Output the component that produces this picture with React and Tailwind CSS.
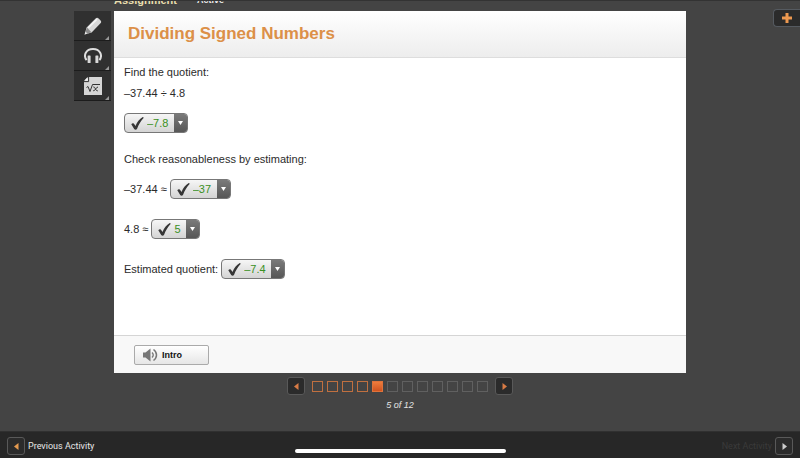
import React, { useState } from 'react';

const TOTAL_STEPS = 12;

const Check = () => (
  <svg viewBox="0 0 13 13" className="pointer-events-none absolute left-1.5 top-[3px] h-[13px] w-[13px]">
    <path d="M0.3 7.2 C1.4 6 2.8 6.1 3.5 7.4 L4.5 9 C6 5 8.4 2 11.8 0 L12.8 0.7 C9.8 4 7.6 7.4 6 11.9 C5.2 12.9 3.8 12.9 3.2 11.9 Z" fill="#363636" />
  </svg>
);

const AnswerSelect = ({ id, label, value }) => (
  <span className="relative inline-flex h-5 overflow-hidden rounded border border-[#777] bg-linear-to-b from-[#f6f6f6] to-[#d4d4d4]">
    <Check />
    <select id={id} aria-label={label} defaultValue={value}
      className="h-full appearance-none bg-transparent pl-[22px] pr-[18px] text-[11px] leading-[18px] text-[#3a9023] outline-none">
      <option value={value}>{value}</option>
    </select>
    <span className="pointer-events-none absolute inset-y-0 right-0 flex w-[13px] items-center justify-center bg-linear-to-b from-[#7a7a7a] to-[#575757]">
      <svg viewBox="0 0 5 4" className="h-1 w-[5px]"><path d="M0 0h5L2.5 4z" fill="#fff" /></svg>
    </span>
  </span>
);

const ArrowButton = ({ label, direction, color, onClick }) => (
  <button aria-label={label} onClick={onClick}
    className="flex h-[18px] w-[18px] shrink-0 items-center justify-center rounded-[3px] border border-[#595959] bg-[#2b2b2b]">
    <svg viewBox="0 0 5 7" className="h-[7px] w-[5px]">
      <path d={direction === 'left' ? 'M4.5 0v7L0 3.5z' : 'M0.5 0v7L5 3.5z'} fill={color} />
    </svg>
  </button>
);

const PencilIcon = () => (
  <svg viewBox="0 0 18 18" className="h-[18px] w-[18px]">
    <path d="M.6 17.4l2-7L11.6 1.5c.9-.9 2.1-.9 3-.1l2 2c.8.9.8 2-.1 2.9L7.6 15.4z" fill="#d8d8d8" />
    <path d="M3 10.6l4.4 4.6-5 1.7-1.2-1.2z" fill="#8b8b8b" />
    <path d="M4.3 10.8l8.7-8.7" stroke="#f5f5f5" strokeWidth="1.5" />
    <path d="M.6 17.4l.9-2.7 1.8 1.8z" fill="#eee" />
  </svg>
);

const HeadphonesIcon = () => (
  <svg viewBox="0 0 18 18" className="h-[18px] w-[18px]" fill="none">
    <path d="M2.6 13.2C-1 8.5 2 2 9 2s10 6.5 6.4 11.2" stroke="#dedede" strokeWidth="2" />
    <rect x="3.6" y="8.5" width="3" height="7.5" rx=".6" fill="#d8d8d8" />
    <rect x="11.4" y="8.5" width="3" height="7.5" rx=".6" fill="#d8d8d8" />
  </svg>
);

const FormulaIcon = () => (
  <svg viewBox="0 0 18 18" className="h-[18px] w-[18px]">
    <path d="M4.6 0H18v18H0V4.6z" fill="#d6d6d6" />
    <path d="M0 3.7L3.7 0v3.7z" fill="#f1f1f1" />
    <path d="M0 4.6h4.6V0" fill="none" stroke="#333" />
    <path d="M2.5 10.5l1.5-1 2 5 2.5-7H16" fill="none" stroke="#333" />
    <path d="M9.3 10c2-.8 2.2 4.5 4.5 3.8M14 10c-2 0-2.5 4-4.8 3.8" fill="none" stroke="#333" />
  </svg>
);

const tools = [
  { name: 'Highlighter', Icon: PencilIcon },
  { name: 'Audio', Icon: HeadphonesIcon },
  { name: 'Formulas', Icon: FormulaIcon },
];

const App = () => {
  const [step, setStep] = useState(5);

  return (
    <div className="flex min-h-screen flex-col bg-[#444] font-['Liberation_Sans',Arial,sans-serif] text-[11px] leading-4 text-[#2b2b2b]">
      <header className="flex h-[11px] items-end gap-5 overflow-hidden border-t border-[#333] pb-[5px] pl-[114px] font-bold">
        <span className="leading-3 text-[#eadfae]">Assignment</span>
        <span className="text-[9px] leading-3 text-[#eee]">Active</span>
      </header>

      <div className="flex flex-1">
        {/* Tools */}
        <aside className="flex w-[114px] shrink-0 flex-col items-end pr-[3px]">
          {tools.map(({ name, Icon }) => (
            <button key={name} aria-label={name}
              className="relative flex h-[30px] w-[37px] items-center justify-center border-b border-[#1c1c1c] bg-[#303030]">
              <Icon />
              <svg viewBox="0 0 4 4" className="absolute bottom-0 right-0.5 h-1 w-1"><path d="M4 0v4H0z" fill="#999" /></svg>
            </button>
          ))}
        </aside>

        {/* Lesson */}
        <main className="flex min-w-0 flex-1 flex-col bg-white">
          <div className="flex h-[47px] items-center border-b border-[#ddd] bg-linear-to-b from-white to-[#ededed] px-3.5">
            <h1 className="text-[17px] font-bold leading-6 text-[#dc9048]">Dividing Signed Numbers</h1>
          </div>
          <div className="flex flex-1 flex-col items-start px-2.5 pt-1.5">
            <p>Find the quotient:</p>
            <p className="mt-[5px]">–37.44 ÷ 4.8</p>
            <div className="mt-3 flex">
              <AnswerSelect id="quotient" label="Quotient" value="–7.8" />
            </div>
            <p className="mt-[18px]">Check reasonableness by estimating:</p>
            <div className="mt-3 flex items-center gap-[3px]">
              <label htmlFor="dividend">–37.44 ≈</label>
              <AnswerSelect id="dividend" label="–37.44 ≈" value="–37" />
            </div>
            <div className="mt-5 flex items-center gap-[3px]">
              <label htmlFor="divisor">4.8 ≈</label>
              <AnswerSelect id="divisor" label="4.8 ≈" value="5" />
            </div>
            <div className="mt-5 flex items-center gap-[3px]">
              <label htmlFor="estimate">Estimated quotient:</label>
              <AnswerSelect id="estimate" label="Estimated quotient:" value="–7.4" />
            </div>
          </div>
          <div className="flex h-[38px] items-center border-t border-[#d5d5d5] bg-[#f8f8f8] px-5">
            <button className="flex h-5 w-[75px] items-center gap-1 rounded-xs border border-[#aaa] bg-linear-to-b from-white to-[#e6e6e6] pl-2 text-[9px] font-bold text-[#111]">
              <svg viewBox="0 0 15 14" className="h-3.5 w-[15px]" fill="none">
                <path d="M0 4.5h2.5L7.5.5v13l-5-4H0z" fill="#777" />
                <path d="M9 4.5c1.5 1.5 1.5 3.5 0 5" stroke="#777" strokeWidth="1.3" />
                <path d="M10.5 1.5c4 3 4 8 0 11" stroke="#777" strokeWidth="1.5" />
              </svg>
              Intro
            </button>
          </div>
        </main>

        <aside className="flex w-[114px] shrink-0 justify-end">
          <button aria-label="Open panel"
            className="-mt-0.5 flex h-[18px] w-[27px] items-center justify-center rounded-l border border-r-0 border-[#555a60] bg-[#2b2b2b]">
            <svg viewBox="0 0 10 10" className="h-2.5 w-2.5"><path d="M3.5 0h3v3.5H10v3H6.5V10h-3V6.5H0v-3h3.5z" fill="#ec9850" /></svg>
          </button>
        </aside>
      </div>

      {/* Pager */}
      <nav className="flex h-[58px] flex-col items-center gap-0.5 pt-1">
        <div className="flex items-center">
          <ArrowButton label="Previous step" direction="left" color="#d87b45" onClick={() => setStep(Math.max(1, step - 1))} />
          <div className="mx-[7px] flex gap-1">
            {Array.from({ length: TOTAL_STEPS }, (_, i) => i + 1).map(n => (
              <button key={n} aria-label={`Step ${n}`} onClick={() => setStep(n)}
                className={`h-[11px] w-[11px] border
                  ${n === step ? 'border-[#e0733a] bg-linear-to-b from-[#ee7c3c] to-[#cf5320]'
                  : n < step ? 'border-[#c07040]'
                  : 'border-[#606060]'}`} />
            ))}
          </div>
          <ArrowButton label="Next step" direction="right" color="#d87b45" onClick={() => setStep(Math.min(TOTAL_STEPS, step + 1))} />
        </div>
        <p className="text-[9px] italic text-[#e4e4e4]">{step} of {TOTAL_STEPS}</p>
      </nav>

      <footer className="relative flex h-[27px] items-center justify-between border-t border-[#303030] bg-[#272727] px-[7px] pt-0.5 font-['Roboto',sans-serif] text-[9px]">
        <div className="flex items-center gap-[3px] text-[#e8e8e8]">
          <ArrowButton label="Previous activity" direction="left" color="#e59a4f" />
          Previous Activity
        </div>
        <div className="flex items-center gap-[3px] text-[#3a3a3a]">
          Next Activity
          <ArrowButton label="Next activity" direction="right" color="#ccc" />
        </div>
        <span className="absolute inset-x-0 bottom-[5px] mx-auto h-1 w-[211px] rounded-full bg-white" />
      </footer>
    </div>
  );
};

export default App;
